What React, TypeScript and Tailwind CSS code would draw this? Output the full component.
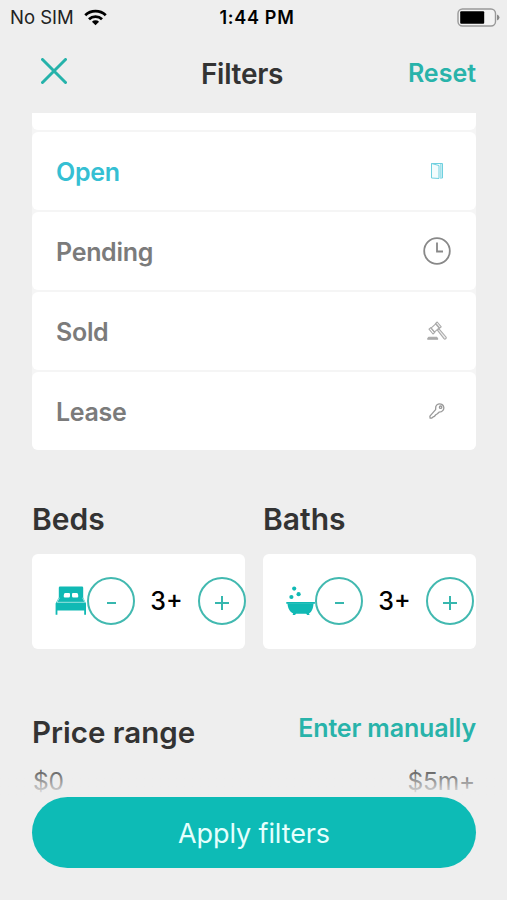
import React from "react";

type Status = {
  label: string;
  active?: boolean;
  icon: React.ReactNode;
};

function DoorIcon() {
  return (
    <svg width="14" height="18" viewBox="0 0 14 18" fill="none" stroke="#6fd0df" strokeWidth="1">
      <path d="M1.5 16V1.5h11V16H10" />
      <path d="M1.5 1.5 9 3.5v13L1.5 16z" fill="#f3fcfd" />
      <path d="M10.8 2v14" strokeWidth="1.8" stroke="#a5e2eb" />
    </svg>
  );
}

function ClockIcon() {
  return (
    <svg width="28" height="28" viewBox="0 0 28 28" fill="none" stroke="#888" strokeWidth="1.8">
      <circle cx="14" cy="14" r="12.8" />
      <path d="M14 5.5v9h6" />
    </svg>
  );
}

function GavelIcon() {
  return (
    <svg width="20" height="20" viewBox="0 0 20 20" fill="none" stroke="#aaa" strokeWidth="1.1" strokeLinejoin="round">
      <path d="m4 7.2 5-4.6 3.4 4-5 4.6z" />
      <path d="m8.400 2.600 1.800-1.600 4 4.800-1.800 1.600zM3.800 6.600 2 8.200l4 4.800 1.800-1.600z" />
      <path d="m10.400 9.200 1.600-1.400 7 8.200c.8 1.400-1 2.700-2 1.600z" fill="#eee" />
      <path d="M.8 18.200v-.8L2 16.200h7.400l1.200 1.200v.8z" fill="#aaa" />
    </svg>
  );
}

function KeyIcon() {
  return (
    <svg width="16" height="16" viewBox="0 0 16 16" fill="none" stroke="#999" strokeWidth="1.3" strokeLinejoin="round">
      <path d="M6.800 3.600C7.400 1.200 10.600.2 12.800 1.400c2.200 1.300 2.600 4.200 1.200 6-1 1.300-2.400 1.800-4 1.800L8.400 10.800l-1.600 1-1.300 1.500-1.400.6-1.300 1.200H1.100l-.2-2L6.600 6.600z" />
      <circle cx="11.6" cy="4.2" r="1.2" />
    </svg>
  );
}

function BedIcon() {
  return (
    <svg className="-mt-px shrink-0" width="32" height="30" viewBox="0 0 32 30" fill="#10b9b4">
      <path
        fillRule="evenodd"
        d="M5 .5h22q1.200 0 1.200 1.300v9.700L31 17.500v11.300h-1.800V24.500H2.400v4.300H.6V17.500l3.200-6V1.800Q3.800.5 5 .5zM10.400 7q-1.200 0-1.400 1.200l-.3 1.800q-.1 1.500 1.200 1.500h3.700q1.400 0 1.400-1.500V8q0-1-1-1zM18 7q-1 0-1 1v2q0 1.500 1.400 1.500h3.700q1.300 0 1.200-1.500L23 8.200Q22.800 7 21.600 7z"
      />
      <path d="M4.400 11.800 2 16.300h27.800l-2.200-4.500" fill="none" stroke="#d5f3f1" strokeWidth=".7" />
    </svg>
  );
}

function BathIcon() {
  return (
    <svg className="-mt-px shrink-0" width="29" height="30" viewBox="0 0 29 30" fill="#10b9b4">
      <circle cx="8.2" cy="2.600" r="2.100" />
      <circle cx="12.600" cy="8.200" r="2.100" />
      <circle cx="5.400" cy="11" r="2.100" />
      <path d="M.3 16h28.600v1.800H.3z" />
      <path d="M1.500 17.500h26c-.2 4.500-1.500 8.500-4.500 9.900l.6 1.600h-2.400l-1-1.200H10L9 29H6.600l.6-1.600C4 26 1.800 22.500 1.500 17.500z" />
    </svg>
  );
}

const statuses: Status[] = [
  { label: "Open", active: true, icon: <DoorIcon /> },
  { label: "Pending", icon: <ClockIcon /> },
  { label: "Sold", icon: <GavelIcon /> },
  { label: "Lease", icon: <KeyIcon /> },
];

function StatusBar() {
  return (
    <div className="flex h-[34px] shrink-0 items-center justify-between pl-2.5 pr-[7px] text-black">
      <div className="flex w-[160px] items-center gap-2.5 text-[18.5px] text-[#222]">
        <span className="pt-px">No SIM</span>
        <svg width="23" height="17" viewBox="0 0 24 17" fill="none" stroke="#000" strokeWidth="2.9">
          <path d="M1.300 6.200a15.500 15.500 0 0 1 21.400 0" />
          <path d="M5.200 10.300a9.700 9.700 0 0 1 13.600 0" />
          <path d="M12 16.500 8.300 12.900a5.300 5.300 0 0 1 7.400 0z" fill="#000" stroke="none" />
        </svg>
      </div>
      <div className="-mr-1 text-[18px] font-semibold tracking-[0.7px]">1:44 PM</div>
      <div className="flex w-[160px] justify-end">
        <svg width="43" height="19" viewBox="0 0 43 19">
          <rect x="1" y="1" width="37.5" height="17" rx="4.5" fill="#f3f3f3" stroke="#999" strokeWidth="1.4" />
          <rect x="3.2" y="3.3" width="24" height="12.4" rx="1" fill="#000" />
          <path d="M40 6.500q2.500.8 2.500 3t-2.500 3z" fill="#888" />
        </svg>
      </div>
    </div>
  );
}

function RoundButton({ children }: { children: React.ReactNode }) {
  return (
    <button className="flex size-12 shrink-0 items-center justify-center rounded-full border-2 border-[#42b9b0]">
      {children}
    </button>
  );
}

function Counter({ icon, value }: { icon: React.ReactNode; value: string }) {
  return (
    <div className="flex h-[95px] items-center rounded-md bg-white pb-px pl-[23px]">
      {icon}
      <RoundButton>
        <span className="mt-[3px] h-[2px] w-[9px] bg-[#36b7ae]" />
      </RoundButton>
      <span className="w-[63px] shrink-0 pt-0.5 text-center text-[25px] font-medium text-black">{value}</span>
      <RoundButton>
        <svg className="mt-[3px]" width="14" height="14" viewBox="0 0 14 14" stroke="#36b7ae" strokeWidth="2">
          <path d="M7 0v14M0 7h14" />
        </svg>
      </RoundButton>
    </div>
  );
}

export default function App() {
  return (
    <div className="flex h-[900px] w-[507px] flex-col overflow-hidden bg-[#eee] font-['Inter','Liberation_Sans',sans-serif]">
      <StatusBar />
      <header className="flex h-[79px] shrink-0 items-center pl-8 pr-[31px]">
        <button className="flex w-[100px] pl-[9px]">
          <svg className="-mt-[5px]" width="26" height="26" viewBox="0 0 26 26" stroke="#25b2aa" strokeWidth="3" strokeLinecap="round">
            <path d="m1.5 1.5 23 23M24.5 1.5l-23 23" />
          </svg>
        </button>
        <h1 className="flex-1 pr-12 pt-px text-center text-[28px] font-semibold tracking-[-0.3px] text-[#333]">Filters</h1>
        <button className="w-[76px] whitespace-nowrap text-right text-[25px] font-semibold text-[#28b3aa]">Reset</button>
      </header>

      <main className="relative flex h-[684px] shrink-0 flex-col overflow-hidden pl-8 pr-[31px]">
        <div className="flex shrink-0 flex-col gap-0.5 rounded-b-md bg-[#f5f5f5]">
          <div className="h-[17px] rounded-b-md bg-white" />
          {statuses.map((status) => (
            <div key={status.label} className="flex h-[78px] items-center justify-between rounded-md bg-white pl-6 pr-[11px]">
              <span
                className={
                  status.active
                    ? "pt-[3px] text-[25px] font-semibold tracking-[-0.3px] text-[#35bfd3]"
                    : "pt-[3px] text-[25px] font-semibold tracking-[-0.3px] text-[#7b7b7b]"
                }
              >
                {status.label}
              </span>
              <span className="flex w-14 justify-center">{status.icon}</span>
            </div>
          ))}
        </div>

        <div className="mt-12 flex shrink-0 gap-[18px]">
          <section className="w-[213px]">
            <h2 className="mb-[13px] text-[30px] font-semibold leading-[43px] text-[#333]">Beds</h2>
            <Counter icon={<BedIcon />} value="3+" />
          </section>
          <section className="w-[213px]">
            <h2 className="mb-[13px] text-[30px] font-semibold leading-[43px] text-[#333]">Baths</h2>
            <Counter icon={<BathIcon />} value="3+" />
          </section>
        </div>

        <div className="mt-[62px] flex shrink-0 items-start justify-between">
          <h2 className="text-[29.5px] font-semibold leading-[43px] text-[#333]">Price range</h2>
          <button className="text-[25px] font-semibold leading-[35px] tracking-[-0.15px] text-[#28b3aa]">Enter manually</button>
        </div>
        <div className="mt-[10px] flex shrink-0 justify-between px-px text-[24.5px] leading-[34px] tracking-[-0.2px] text-[#444]">
          <span>$0</span>
          <span>$5m+</span>
        </div>
        <div className="absolute inset-x-0 bottom-0 h-8 bg-gradient-to-b from-[#eee]/0 to-[#eee]" />
      </main>

      <footer className="shrink-0 pl-8 pr-[31px]">
        <button className="flex h-[71px] w-full items-center justify-center rounded-full bg-[#0dbbb6] pt-[3px] text-[27px] tracking-[-0.1px] text-[#e5fffd]">
          Apply filters
        </button>
      </footer>
    </div>
  );
}
